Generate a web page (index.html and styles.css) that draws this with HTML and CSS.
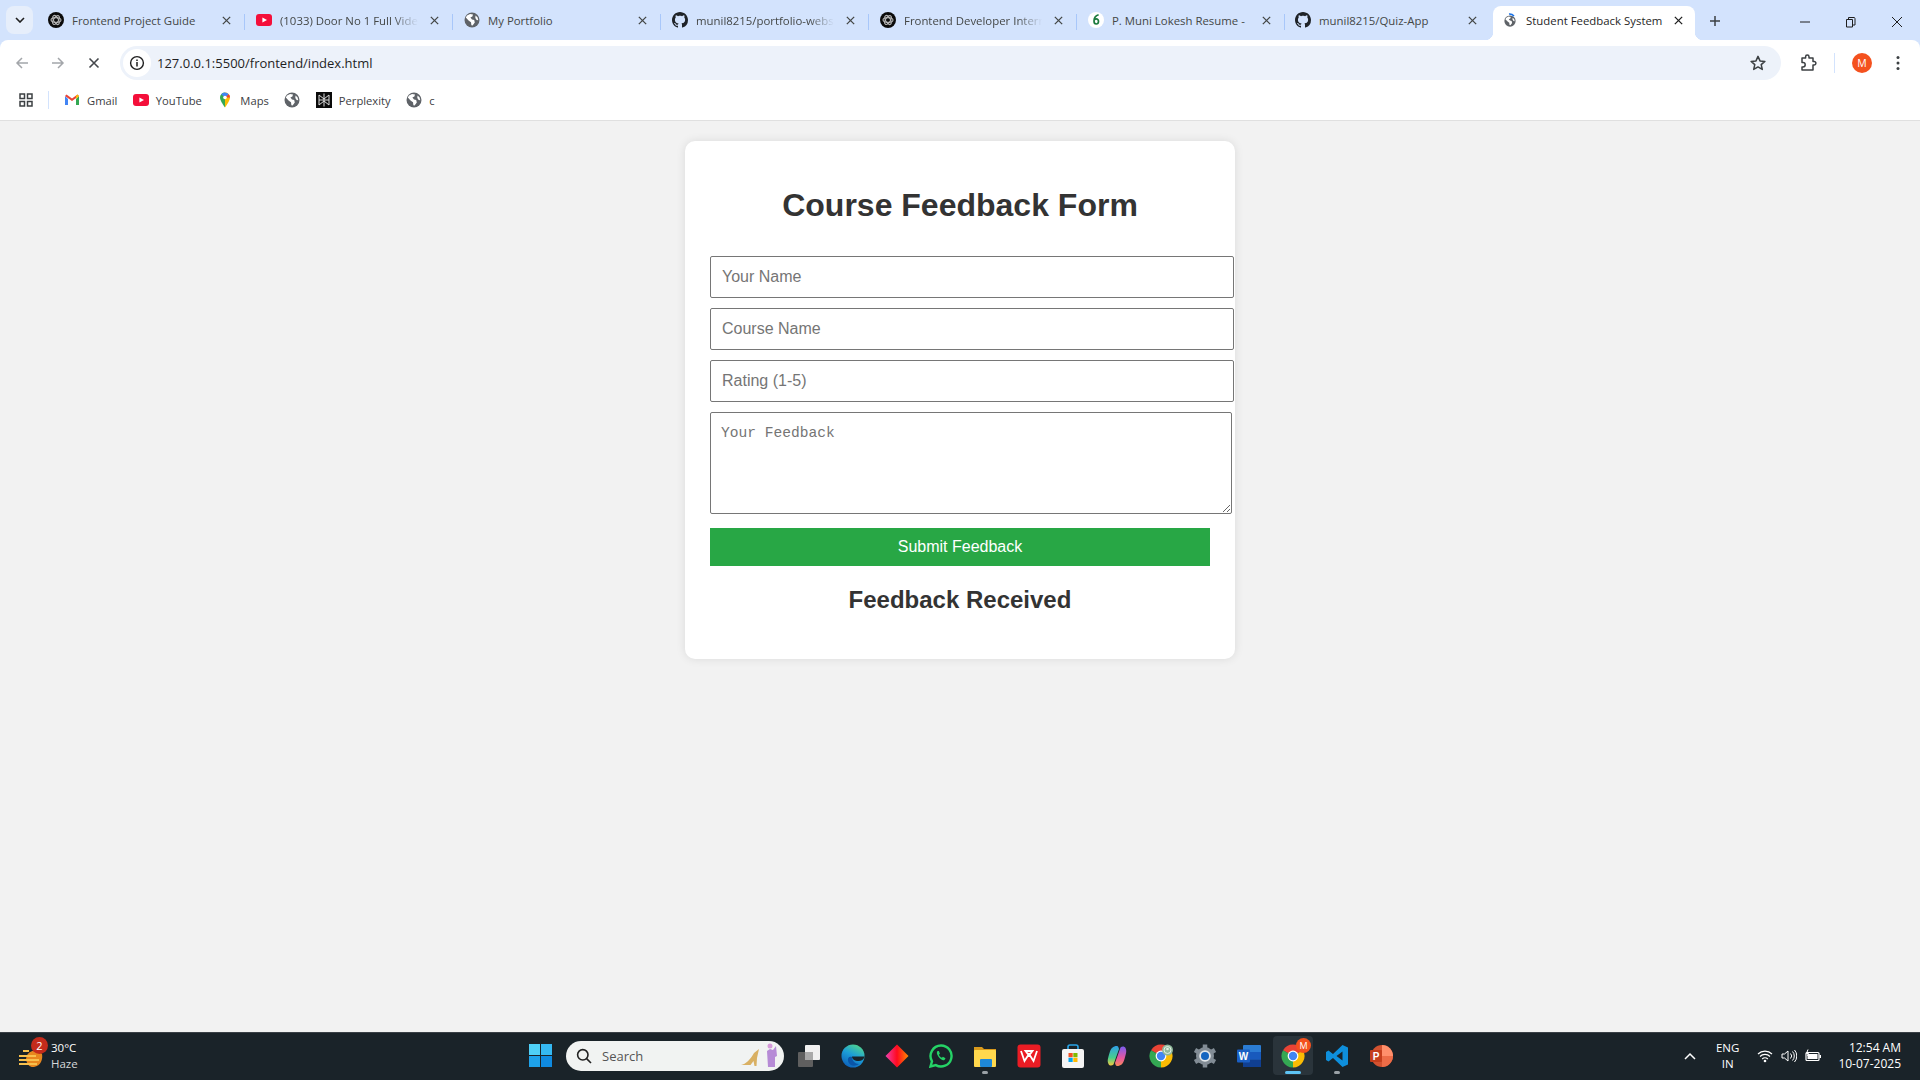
FILE: index.html
```html
<!DOCTYPE html>
<html lang="en">
<head>
    <meta charset="UTF-8">
    <title>Student Feedback System</title>
    <link rel="stylesheet" href="styles.css">
</head>
<body>
    <svg class="sprites" width="0" height="0">
        <symbol id="i-close" viewBox="0 0 12 12"><path d="M2 2l8 8M10 2l-8 8" fill="none" stroke="currentColor" stroke-width="1.4"/></symbol>
        <symbol id="i-globe" viewBox="0 0 16 16"><circle cx="8" cy="8" r="7.5" fill="#5f6368"/><path d="M3 3.5l3-1.5 3 .6-.6 2-2 1 1.6 1.8 2.2.6.6 2.6-2.2 3-1.2-.4-.4-3-2.2-1.4-3-3.2zM11.5 3.5l2 1.8.8 3-1.6-.2-1.4-2z" fill="#fff"/></symbol>
        <symbol id="i-gpt" viewBox="0 0 16 16"><circle cx="8" cy="8" r="8" fill="#0b0b0b"/><g fill="none" stroke="#b5b5b5" stroke-width="1.1"><ellipse cx="8" cy="8" rx="5" ry="2.4"/><ellipse cx="8" cy="8" rx="5" ry="2.4" transform="rotate(60 8 8)"/><ellipse cx="8" cy="8" rx="5" ry="2.4" transform="rotate(120 8 8)"/></g></symbol>
        <symbol id="i-github" viewBox="0 0 16 16"><path fill="#1f2328" d="M8 0C3.58 0 0 3.58 0 8c0 3.54 2.29 6.53 5.47 7.59.4.07.55-.17.55-.38 0-.19-.01-.82-.01-1.49-2.01.37-2.53-.49-2.69-.94-.09-.23-.48-.94-.82-1.13-.28-.15-.68-.52-.01-.53.63-.01 1.08.58 1.23.82.72 1.21 1.87.87 2.33.66.07-.52.28-.87.51-1.07-1.78-.2-3.64-.89-3.64-3.95 0-.87.31-1.59.82-2.15-.08-.2-.36-1.02.08-2.12 0 0 .67-.21 2.2.82.64-.18 1.32-.27 2-.27.68 0 1.36.09 2 .27 1.53-1.04 2.2-.82 2.2-.82.44 1.1.16 1.92.08 2.12.51.56.82 1.27.82 2.15 0 3.07-1.87 3.75-3.65 3.95.29.25.54.73.54 1.48 0 1.07-.01 1.93-.01 2.2 0 .21.15.46.55.38A8.013 8.013 0 0016 8c0-4.42-3.58-8-8-8z"/></symbol>
        <symbol id="i-yt" viewBox="0 0 16 16"><rect x="0" y="2" width="16" height="12" rx="3" fill="#f40f3a"/><path d="M6.4 5.4L11 8l-4.6 2.600z" fill="#fff"/></symbol>
        <symbol id="i-chrome" viewBox="0 0 24 24"><path d="M12 12L2.04 6.25A11.5 11.5 0 0 1 21.96 6.25z" fill="#ea4335"/><path d="M12 12L21.96 6.25A11.5 11.5 0 0 1 12 23.5z" fill="#fbbc04"/><path d="M12 12L12 23.5A11.5 11.5 0 0 1 2.04 6.25z" fill="#34a853"/><circle cx="12" cy="12" r="5.4" fill="#fff"/><circle cx="12" cy="12" r="4.2" fill="#4285f4"/></symbol>
    </svg>

    <header class="chrome">
        <div class="tabstrip">
            <button class="tablist">
                <svg width="10" height="6" viewBox="0 0 10 6"><path d="M1 1l4 4 4-4" fill="none" stroke="#1f1f1f" stroke-width="1.6"/></svg>
            </button>
            <div class="tab">
                <svg class="favicon"><use href="#i-gpt"/></svg>
                <span class="tab-title">Frontend Project Guide</span>
                <svg class="tab-close"><use href="#i-close"/></svg>
            </div>
            <div class="tab">
                <svg class="favicon"><use href="#i-yt"/></svg>
                <span class="tab-title fade">(1033) Door No 1 Full Video Song</span>
                <svg class="tab-close"><use href="#i-close"/></svg>
            </div>
            <div class="tab">
                <svg class="favicon"><use href="#i-globe"/></svg>
                <span class="tab-title">My Portfolio</span>
                <svg class="tab-close"><use href="#i-close"/></svg>
            </div>
            <div class="tab">
                <svg class="favicon"><use href="#i-github"/></svg>
                <span class="tab-title fade">munil8215/portfolio-website</span>
                <svg class="tab-close"><use href="#i-close"/></svg>
            </div>
            <div class="tab">
                <svg class="favicon"><use href="#i-gpt"/></svg>
                <span class="tab-title fade">Frontend Developer Internship</span>
                <svg class="tab-close"><use href="#i-close"/></svg>
            </div>
            <div class="tab">
                <svg class="favicon" viewBox="0 0 16 16"><circle cx="8" cy="8" r="8" fill="#fff"/><path d="M10.6 2.8C8 3.6 6 6 6 9c0 1.7.9 3 2.2 3s2.3-1.2 2.3-2.7-1-2.5-2.2-2.5c-1 0-1.7.5-2.1 1.3" fill="none" stroke="#1b7a3d" stroke-width="1.7"/></svg>
                <span class="tab-title">P. Muni Lokesh Resume -</span>
                <svg class="tab-close"><use href="#i-close"/></svg>
            </div>
            <div class="tab last">
                <svg class="favicon"><use href="#i-github"/></svg>
                <span class="tab-title">munil8215/Quiz-App</span>
                <svg class="tab-close"><use href="#i-close"/></svg>
            </div>
            <div class="tab active">
                <svg class="favicon" viewBox="0 0 16 16"><use href="#i-globe" width="12" height="12" x="2" y="3"/><path d="M7 2a6 6 0 0 1 5 2" fill="none" stroke="#1a73e8" stroke-width="1.6"/></svg>
                <span class="tab-title">Student Feedback System</span>
                <svg class="tab-close"><use href="#i-close"/></svg>
            </div>
            <svg class="newtab" width="14" height="14" viewBox="0 0 14 14"><path d="M7 2v10M2 7h10" stroke="#3c4043" stroke-width="1.5"/></svg>
            <div class="winctrl">
                <svg class="win-min" width="12" height="12" viewBox="0 0 12 12"><path d="M1 6h10" stroke="#1f1f1f"/></svg>
                <svg width="12" height="12" viewBox="0 0 12 12"><path d="M2.500 3.500h6v7.500h-6zM4.500 3.500V1.500h5.800l.7.7v6.800h-2.500" fill="none" stroke="#1f1f1f"/></svg>
                <svg width="12" height="12" viewBox="0 0 12 12"><path d="M1 1l10 10M11 1L1 11" stroke="#1f1f1f"/></svg>
            </div>
        </div>

        <div class="toolbar">
            <svg class="nav-btn" width="14" height="14" viewBox="0 0 14 14"><path d="M13 7H2M7 2L2 7l5 5" fill="none" stroke="#a3a6aa" stroke-width="1.5"/></svg>
            <svg class="nav-btn" width="14" height="14" viewBox="0 0 14 14"><path d="M1 7h11M7 2l5 5-5 5" fill="none" stroke="#a3a6aa" stroke-width="1.5"/></svg>
            <svg class="nav-btn" width="14" height="14" viewBox="0 0 14 14"><path d="M2.500 2.500l9 9M11.500 2.500l-9 9" fill="none" stroke="#45484c" stroke-width="1.6"/></svg>
            <div class="omnibox">
                <span class="site-info">
                    <svg width="16" height="16" viewBox="0 0 16 16"><circle cx="8" cy="8" r="6.400" fill="none" stroke="#1f1f1f" stroke-width="1.4"/><path d="M8 7v4.400M8 4.400v1.500" stroke="#1f1f1f" stroke-width="1.5"/></svg>
                </span>
                <span class="url">127.0.0.1:5500/frontend/index.html</span>
                <svg class="star" width="18" height="18" viewBox="0 0 18 18"><path d="M9 2.400l2 4.500 4.900.5-3.700 3.200 1.100 4.800L9 12.900l-4.300 2.500 1.100-4.800-3.700-3.200 4.900-.5z" fill="none" stroke="#3c4043" stroke-width="1.5" stroke-linejoin="round"/></svg>
            </div>
            <div class="toolbar-right">
                <svg width="18" height="18" viewBox="0 0 18 18"><path d="M3 4h3.600V2.800a1.700 1.700 0 0 1 3.400 0V4h4v3.600h1.200a1.700 1.700 0 0 1 0 3.400H14v5H3v-3h1a2 2 0 0 0 0-4.400H3z" fill="none" stroke="#3c4043" stroke-width="1.5" stroke-linejoin="round"/></svg>
                <span class="tb-sep"></span>
                <span class="avatar">M</span>
                <svg width="4" height="16" viewBox="0 0 4 16"><circle cx="2" cy="2.500" r="1.500" fill="#3c4043"/><circle cx="2" cy="8" r="1.500" fill="#3c4043"/><circle cx="2" cy="13.500" r="1.500" fill="#3c4043"/></svg>
            </div>
        </div>

        <div class="bookmarks">
            <svg class="apps" width="14" height="14" viewBox="0 0 14 14"><g fill="none" stroke="#3c4043" stroke-width="1.500"><rect x="1" y="1" width="4.500" height="4.500"/><rect x="8.500" y="1" width="4.500" height="4.500"/><rect x="1" y="8.500" width="4.500" height="4.500"/><rect x="8.500" y="8.500" width="4.500" height="4.500"/></g></svg>
            <span class="bm-sep"></span>
            <a class="bm">
                <svg class="favicon" viewBox="0 0 16 16"><path d="M1 4v9h3V7z" fill="#4285f4"/><path d="M15 4v9h-3V7z" fill="#34a853"/><path d="M1 4l7 5 7-5-1.500-1.400L8 6.500 2.500 2.600z" fill="#ea4335"/><path d="M12 7l3-3-1.500-1.400L12 3.700z" fill="#fbbc04"/></svg>
                Gmail
            </a>
            <a class="bm">
                <svg class="favicon"><use href="#i-yt"/></svg>
                YouTube
            </a>
            <a class="bm">
                <svg class="favicon" viewBox="0 0 16 16"><path d="M8 .5a5 5 0 0 0-5 5c0 3.500 5 10 5 10z" fill="#34a853"/><path d="M8 .5a5 5 0 0 1 5 5c0 3.500-5 10-5 10z" fill="#fbbc04"/><path d="M4.200 2.300A5 5 0 0 1 8 .5a5 5 0 0 1 3.800 1.800L8 5.500z" fill="#4285f4"/><path d="M11.800 2.300A5 5 0 0 1 13 5.500L8 5.500z" fill="#ea4335"/><circle cx="8" cy="5.500" r="1.800" fill="#fff"/></svg>
                Maps
            </a>
            <a class="bm">
                <svg class="favicon"><use href="#i-globe"/></svg>
            </a>
            <a class="bm">
                <svg class="favicon" viewBox="0 0 16 16"><rect width="16" height="16" fill="#0a0a0a"/><path d="M8 1.500v13M3 3l5 4 5-4M3 13l5-4 5 4M3 3v10M13 3v10M3 8h10" fill="none" stroke="#ddd" stroke-width="1"/></svg>
                Perplexity
            </a>
            <a class="bm">
                <svg class="favicon"><use href="#i-globe"/></svg>
                c
            </a>
        </div>
    </header>

    <main class="page">
        <div class="container">
            <h2>Course Feedback Form</h2>
            <form>
                <input type="text" placeholder="Your Name">
                <input type="text" placeholder="Course Name">
                <input type="text" placeholder="Rating (1-5)">
                <textarea placeholder="Your Feedback"></textarea>
                <button type="button" class="submit">Submit Feedback</button>
            </form>
            <h3>Feedback Received</h3>
        </div>
    </main>

    <footer class="taskbar">
        <div class="weather">
            <span class="weather-icon">
                <svg width="26" height="26" viewBox="0 0 26 26"><path d="M8 16a9 9 0 0 1 16-5c1 5-1 12-8 13-4 .5-7-2-8-8z" fill="#e8871e"/><path d="M1 13h17M1 17h20M1 21h18" stroke="#f7c04d" stroke-width="2"/><path d="M5 8h6" stroke="#f7c04d" stroke-width="2"/></svg>
                <span class="badge">2</span>
            </span>
            <div class="weather-text">
                <span>30°C</span>
                <span class="dim">Haze</span>
            </div>
        </div>

        <div class="task-center">
            <svg class="start" width="23" height="23" viewBox="0 0 23 23"><rect width="11" height="11" fill="#4fd0f7"/><rect x="12" width="11" height="11" fill="#35b8f2"/><rect y="12" width="11" height="11" fill="#1ea2ea"/><rect x="12" y="12" width="11" height="11" fill="#0f8ae0"/></svg>
            <div class="search">
                <svg width="16" height="16" viewBox="0 0 16 16"><circle cx="6.800" cy="6.800" r="5.200" fill="none" stroke="#222" stroke-width="1.600"/><path d="M10.600 10.600L15 15" stroke="#222" stroke-width="1.600"/></svg>
                <span class="search-label">Search</span>
                <svg class="search-art" width="38" height="26" viewBox="0 0 38 26"><path d="M1 22c5-1 9-5 13-12l5-4-2 9-.5 8h-2l-1-5-3 4z" fill="#d9b063"/><path d="M27 8l3-2 3 1 3-4 1 10-2 1v10h-7z" fill="#b68bd6"/><circle cx="30" cy="3" r="2.500" fill="#d59ad9"/></svg>
            </div>
            <div class="task-icons">
                <svg viewBox="0 0 24 24"><rect x="8" y="1" width="15" height="15" rx="1" fill="#f0f0f0"/><rect x="1" y="8" width="15" height="15" rx="1" fill="#5f5f5f"/><rect x="8" y="8" width="8" height="8" fill="#a9a9a9"/></svg>
                <svg viewBox="0 0 24 24"><defs><linearGradient id="edge" x1="0.700" y1="0" x2="0.200" y2="1"><stop offset="0" stop-color="#4fd38f"/><stop offset="0.450" stop-color="#1c9ed8"/><stop offset="1" stop-color="#0c5cb8"/></linearGradient></defs><circle cx="12" cy="12" r="11.500" fill="url(#edge)"/><path d="M11 12.500h12.500c-.5 3-3 4.500-6 4.500-4 0-6.500-2-6.500-4.500z" fill="#1a2329"/><path d="M11 13c0 3.500 3 7 7 7-4 3-10 2-11-3-.6-3 1-5 4-4z" fill="#0a55a8"/></svg>
                <svg viewBox="0 0 24 24"><defs><linearGradient id="gem" x1="0" y1="0" x2="1" y2="0"><stop offset="0" stop-color="#f040b0"/><stop offset="0.500" stop-color="#ff0a1e"/><stop offset="1" stop-color="#ff8a00"/></linearGradient></defs><path d="M12 0.500L23.500 12 12 23.500.5 12z" fill="url(#gem)"/></svg>
                <svg viewBox="0 0 24 24"><path d="M12 1.500a10.500 10.500 0 0 0-9 15.800L1.500 22.500l5.300-1.400A10.500 10.500 0 1 0 12 1.500z" fill="none" stroke="#25d366" stroke-width="2.400"/><path d="M8.500 7c-1 1-1 3 1 5.800s4.500 4 6 3.200l1-1.800-2.600-1.400-1 1c-1.500-.6-2.500-1.800-3-3l1-1-1-2.800z" fill="#25d366"/></svg>
                <span class="task-item">
                    <svg viewBox="0 0 24 24"><path d="M1 3h8l2 2h12v3H1z" fill="#d99a1c"/><rect x="1" y="6" width="22" height="17" rx="1" fill="#ffd84d"/><rect x="7" y="15" width="12" height="8" rx="1" fill="#1e88d8"/></svg>
                    <span class="task-dot"></span>
                </span>
                <svg viewBox="0 0 24 24"><rect x="0.500" y="0.500" width="23" height="23" rx="3" fill="#eb1c24"/><path d="M4 7l3.500 10 4.500-7 4.500 7L20 7M8.500 7h7L12 11.500z" fill="none" stroke="#fff" stroke-width="1.800"/></svg>
                <svg viewBox="0 0 24 24"><path d="M7 7V3a2 2 0 0 1 2-2h6a2 2 0 0 1 2 2v4" fill="none" stroke="#2aa5e8" stroke-width="1.600"/><rect x="1" y="5" width="22" height="19" rx="2" fill="#f4f4f4"/><rect x="7.500" y="9" width="4.200" height="4.200" fill="#f25022"/><rect x="12.300" y="9" width="4.200" height="4.200" fill="#7fba00"/><rect x="7.500" y="13.800" width="4.200" height="4.200" fill="#00a4ef"/><rect x="12.300" y="13.800" width="4.200" height="4.200" fill="#ffb900"/></svg>
                <svg viewBox="0 0 24 24"><defs><linearGradient id="cop-a" x1="0" y1="0" x2="0" y2="1"><stop offset="0" stop-color="#2f9fe8"/><stop offset="0.600" stop-color="#47cf8c"/><stop offset="1" stop-color="#f7c93d"/></linearGradient><linearGradient id="cop-b" x1="0" y1="0" x2="0" y2="1"><stop offset="0" stop-color="#7b5cf0"/><stop offset="0.600" stop-color="#e8579d"/><stop offset="1" stop-color="#f98a5a"/></linearGradient></defs><path d="M12 2c-4 0-6 2-7.500 7-1.500 5-2.500 8-1 11 1 2 3.500 2 5 .5L14 5c-.5-2-1-3-2-3z" fill="url(#cop-a)"/><path d="M12 22c4 0 6-2 7.500-7s2.500-8 1-11c-1-2-3.500-2-5-.5L10 19c.5 2 1 3 2 3z" fill="url(#cop-b)"/></svg>
                <svg viewBox="0 0 24 24"><use href="#i-chrome"/><circle cx="18.500" cy="6" r="5.500" fill="#8fb89a"/><circle cx="18.500" cy="6" r="3.500" fill="none" stroke="#e4efe6"/><circle cx="18.500" cy="5" r="1.300" fill="#e4efe6"/></svg>
                <svg viewBox="0 0 24 24"><circle cx="12" cy="12" r="9" fill="#828c95"/><path d="M12 .5v4M12 19.500v4M2 6l3.500 2M18.500 16l3.500 2M2 18l3.500-2M18.500 8L22 6" stroke="#828c95" stroke-width="4.500"/><circle cx="12" cy="12" r="5.800" fill="#e3e7ea"/><circle cx="12" cy="12" r="4" fill="#1565c0"/></svg>
                <svg viewBox="0 0 24 24"><rect x="6" y="1" width="18" height="22" rx="1" fill="#2b7cd3"/><rect x="6" y="8" width="18" height="7.500" fill="#185abd"/><rect x="6" y="15.500" width="18" height="7.500" fill="#103f91"/><rect x="0" y="5.500" width="13" height="13" rx="1" fill="#1a5fc4"/><text x="6.500" y="15.600" class="icon-letter">W</text></svg>
                <span class="task-item task-active">
                    <svg viewBox="0 0 24 24"><use href="#i-chrome"/></svg>
                    <span class="task-badge">M</span>
                    <span class="task-line"></span>
                </span>
                <span class="task-item">
                    <svg viewBox="0 0 24 24"><path d="M17.500 1L8 10 3.500 6.500 1 8v8l2.500 1.500L8 14l9.500 9 5.500-2.500v-17zM17.500 7.500v9L11.500 12z" fill="#0e8fdc" fill-rule="evenodd"/></svg>
                    <span class="task-dot"></span>
                </span>
                <svg viewBox="0 0 24 24"><circle cx="13" cy="12" r="11" fill="#d35230"/><path d="M13 12V1a11 11 0 0 1 11 11z" fill="#ff8f6b"/><path d="M13 12h11a11 11 0 0 1-11 11z" fill="#ed6c47"/><rect x="1" y="6" width="12" height="12" rx="1" fill="#c43e1c"/><text x="7" y="15.600" class="icon-letter">P</text></svg>
            </div>
        </div>

        <div class="tray">
            <svg class="tray-chevron" width="12" height="8" viewBox="0 0 12 8"><path d="M1 7l5-5 5 5" fill="none" stroke="#fff" stroke-width="1.500"/></svg>
            <div class="lang"><span>ENG</span><span>IN</span></div>
            <div class="tray-icons">
                <svg width="16" height="14" viewBox="0 0 16 14"><path d="M1 5a10 10 0 0 1 14 0M3 7.500a7 7 0 0 1 10 0M5.200 10a4 4 0 0 1 5.600 0" fill="none" stroke="#fff" stroke-width="1.200"/><circle cx="8" cy="12" r="1.300" fill="#fff"/></svg>
                <svg width="16" height="14" viewBox="0 0 16 14"><path d="M1 5h2.500L7 2v10L3.500 9H1zM9.500 4.500a3.500 3.500 0 0 1 0 5M11.500 2.500a6.500 6.500 0 0 1 0 9M13.500 1a9 9 0 0 1 0 12" fill="none" stroke="#fff"/></svg>
                <svg width="17" height="14" viewBox="0 0 17 14"><rect x="1" y="3.500" width="13" height="8" rx="1" fill="none" stroke="#fff" stroke-width="1.200"/><rect x="2.500" y="5" width="10" height="5" fill="#fff"/><rect x="14.500" y="6" width="1.500" height="3" fill="#fff"/><path d="M3 .5L1.500 4.500h2L2.500 7" stroke="#fff" fill="none"/></svg>
            </div>
            <div class="clock"><span>12:54 AM</span><span>10-07-2025</span></div>
        </div>
    </footer>
</body>
</html>
```

FILE: styles.css
```css
body {
    margin: 0;
    height: 100vh;
    display: flex;
    flex-direction: column;
    overflow: hidden;
    font-family: "Liberation Sans", Arial, sans-serif;
    background-color: #f2f2f2;
}

.sprites {
    display: block;
    height: 0;
}

/* browser chrome */
.chrome {
    flex: none;
    background-color: #d3e3fd;
    border-bottom: 1px solid #e0e0e0;
    font-family: "Open Sans", sans-serif;
}

.tabstrip {
    height: 40px;
    display: flex;
    align-items: flex-end;
    padding-left: 6px;
}

.tablist {
    width: 27px;
    height: 28px;
    margin: 0 4px 6px 0;
    padding: 0;
    border: none;
    border-radius: 8px;
    background-color: #e6eefb;
    display: flex;
    align-items: center;
    justify-content: center;
}

.tab {
    flex: none;
    width: 208px;
    height: 34px;
    box-sizing: border-box;
    padding: 0 11px 6px 11px;
    display: flex;
    align-items: center;
    gap: 8px;
    position: relative;
    color: #444746;
    font-size: 11.4px;
}

.tab::after {
    content: "";
    position: absolute;
    right: 0;
    top: 8px;
    height: 16px;
    width: 1px;
    background-color: #a8c7fa;
}

.tab.last {
    padding: 0 13px 6px 10px;
}

.tab.last::after {
    display: none;
}

.favicon {
    flex: none;
    width: 16px;
    height: 16px;
}

.tab-title {
    flex: 1;
    overflow: hidden;
    white-space: nowrap;
}

.tab-title.fade {
    -webkit-mask-image: linear-gradient(to right, #000 80%, transparent 98%);
    mask-image: linear-gradient(to right, #000 80%, transparent 98%);
}

.tab-close {
    flex: none;
    width: 11px;
    height: 11px;
    margin-right: 2px;
    color: #444746;
}

.tab.active {
    width: 202px;
    padding: 0 9px 6px 9px;
    background-color: #fff;
    border-radius: 8px 8px 0 0;
    color: #1f1f1f;
}

.tab.active .tab-close {
    color: #1f1f1f;
}

/* the flared feet of the active tab */
.tab.active::before,
.tab.active::after {
    content: "";
    position: absolute;
    top: auto;
    bottom: 0;
    width: 8px;
    height: 8px;
}

.tab.active::before {
    left: -8px;
    background: radial-gradient(circle at 0 0, transparent 8px, #fff 8.5px);
}

.tab.active::after {
    right: -8px;
    background: radial-gradient(circle at 100% 0, transparent 8px, #fff 8.5px);
}

.newtab {
    margin: 0 0 12px 13px;
}

.winctrl {
    margin: 0 0 12px auto;
    display: flex;
    gap: 35px;
    padding-right: 17px;
}

.win-min {
    margin-right: -2px;
}

.toolbar {
    height: 46px;
    box-sizing: border-box;
    padding: 6px 0 6px 15px;
    display: flex;
    align-items: center;
    background-color: #fff;
    border-radius: 8px 8px 0 0;
}

.nav-btn {
    flex: none;
    margin-right: 22px;
}

.omnibox {
    width: 1661px;
    height: 34px;
    margin-left: -3px;
    box-sizing: border-box;
    padding: 0 14px 0 3px;
    display: flex;
    align-items: center;
    background-color: #edf2fa;
    border-radius: 17px;
    font-size: 13px;
    color: #1f1f1f;
}

.site-info {
    width: 28px;
    height: 28px;
    border-radius: 50%;
    background-color: #fff;
    display: flex;
    align-items: center;
    justify-content: center;
    margin-right: 6px;
}

.url {
    flex: 1;
}

.toolbar-right {
    display: flex;
    align-items: center;
    margin-left: 18px;
}

.tb-sep {
    width: 1px;
    height: 20px;
    background-color: #d3e3fd;
    margin: 0 17px;
}

.avatar {
    width: 20px;
    height: 20px;
    margin-right: 24px;
    border-radius: 50%;
    background-color: #f4511e;
    color: #fff;
    font-size: 10.5px;
    line-height: 20px;
    text-align: center;
}

.bookmarks {
    height: 34px;
    box-sizing: border-box;
    padding: 0 0 6px 19px;
    display: flex;
    align-items: center;
    background-color: #fff;
    font-size: 11.2px;
    color: #3c4043;
}

.apps {
    flex: none;
}

.bm-sep {
    width: 1px;
    height: 18px;
    margin: 0 15px;
    background-color: #d3e3fd;
}

.bm {
    display: flex;
    align-items: center;
    gap: 7px;
    margin-right: 15.5px;
}

/* feedback form */
.page {
    flex: 1;
}

.container {
    width: 500px;
    margin: 20px auto 0;
    padding: 25px;
    background-color: #fff;
    border-radius: 10px;
    box-shadow: 0 0 10px rgba(0, 0, 0, 0.1);
    color: #333;
}

h2 {
    text-align: center;
    font-size: 32px;
    margin: 21.44px 0;
}

h3 {
    text-align: center;
    font-size: 24px;
    margin: 20px 0;
}

form {
    display: flow-root;
}

input,
textarea {
    width: 500px;
    border: 1px solid #767676;
    border-radius: 2px;
    color: #333;
    background-color: #fff;
}

input {
    display: block;
    height: 18px;
    margin: 10px 0;
    padding: 11px;
    font-family: "Liberation Sans", Arial, sans-serif;
    font-size: 16px;
}

textarea {
    height: 78px;
    margin: 0 0 10px;
    padding: 12px 10px 10px;
    font-family: "Liberation Mono", monospace;
    font-size: 14.6px;
}

.submit {
    display: block;
    width: 500px;
    height: 38px;
    padding: 0;
    border: none;
    background-color: #28a745;
    color: #fff;
    font-family: "Liberation Sans", Arial, sans-serif;
    font-size: 16px;
}

/* taskbar */
.taskbar {
    flex: none;
    height: 48px;
    box-sizing: border-box;
    padding-bottom: 2px;
    border-top: 1px solid #3a4046;
    background-color: #1a2329;
    color: #fff;
    display: flex;
    align-items: center;
    font-family: "Open Sans", sans-serif;
    font-size: 12px;
}

.weather {
    width: 516px;
    flex: none;
    display: flex;
    align-items: center;
    padding-left: 18px;
    box-sizing: border-box;
    gap: 7px;
}

.weather-icon {
    position: relative;
    display: flex;
}

.badge {
    position: absolute;
    top: -6px;
    right: -4px;
    width: 17px;
    height: 17px;
    border-radius: 50%;
    background-color: #c42b1c;
    font-size: 11px;
    line-height: 17px;
    text-align: center;
}

.weather-text {
    display: flex;
    flex-direction: column;
    gap: 1px;
    line-height: 15px;
    font-size: 11.5px;
}

.dim {
    color: #d5d8da;
}

.task-center {
    flex: none;
    display: flex;
    align-items: center;
}

.start {
    margin: 0 14px 0 13px;
}

.search {
    width: 218px;
    height: 30px;
    box-sizing: border-box;
    padding: 0 6px 0 10px;
    display: flex;
    align-items: center;
    border-radius: 15px;
    background-color: #f1f3f2;
    color: #555;
    font-size: 13px;
}

.search-label {
    flex: 1;
    margin-left: 10px;
}

.task-icons {
    display: flex;
    align-items: center;
    gap: 20px;
    margin-left: 13px;
}

.task-icons svg {
    width: 24px;
    height: 24px;
    display: block;
    flex: none;
}

.icon-letter {
    fill: #fff;
    font-size: 10px;
    font-weight: 700;
    text-anchor: middle;
    font-family: "Liberation Sans", sans-serif;
}

.task-item {
    position: relative;
    width: 24px;
    height: 24px;
}

.task-dot {
    position: absolute;
    left: 9px;
    bottom: -6px;
    width: 6px;
    height: 3px;
    border-radius: 2px;
    background-color: #9aa1a6;
}

.task-active::before {
    content: "";
    position: absolute;
    inset: -8px -8px -7px;
    background-color: #2a343b;
    border-radius: 4px;
}

.task-active svg {
    position: relative;
}

.task-badge {
    position: absolute;
    top: -6px;
    right: -6px;
    width: 15px;
    height: 15px;
    border-radius: 50%;
    background-color: #f4511e;
    font-size: 9px;
    line-height: 15px;
    text-align: center;
}

.task-line {
    position: absolute;
    left: 4px;
    bottom: -6px;
    width: 16px;
    height: 3px;
    border-radius: 2px;
    background-color: #5ec4f5;
}

.tray {
    flex: 1;
    display: flex;
    align-items: center;
    justify-content: flex-end;
    padding-right: 19px;
}

.tray-chevron {
    margin-right: 20px;
}

.lang {
    display: flex;
    flex-direction: column;
    align-items: center;
    line-height: 16px;
    font-size: 11.5px;
    margin-right: 18px;
}

.tray-icons {
    display: flex;
    gap: 8px;
    margin-right: 16px;
}

.clock {
    display: flex;
    flex-direction: column;
    align-items: flex-end;
    line-height: 16px;
}
```
